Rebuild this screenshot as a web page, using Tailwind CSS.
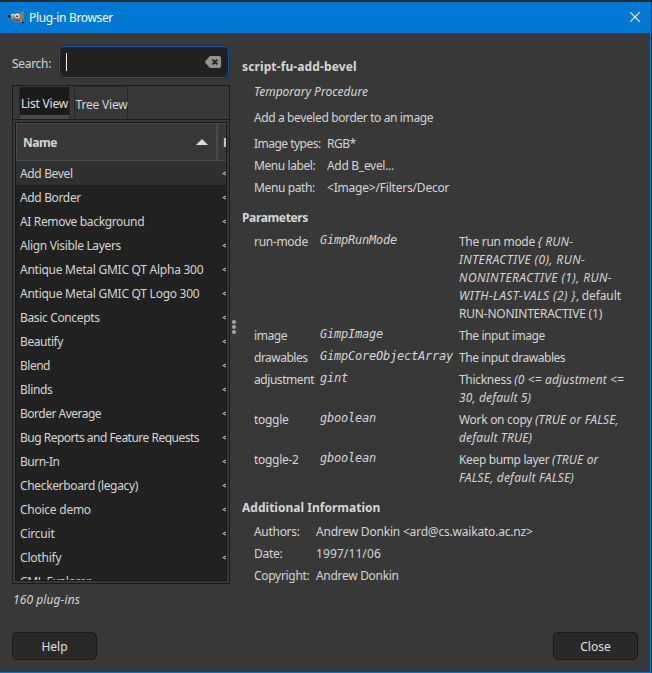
<!DOCTYPE html>
<html lang="en">
<head>
<meta charset="utf-8">
<title>Plug-in Browser</title>
<script src="https://cdn.jsdelivr.net/npm/@tailwindcss/browser@4"></script>
</head>
<body class="w-[652px] h-[673px] overflow-hidden bg-[#2b2b2b] pt-[2px] pr-px font-['Noto_Sans','Open_Sans',sans-serif] text-[12px] leading-[18px] text-[#d6d6d6] whitespace-nowrap">
<div class="h-[671px] flex flex-col border-r border-b border-[#0078d4] bg-[#383838]">

  <!-- Title bar -->
  <header class="h-[31px] shrink-0 flex items-center bg-[#0078d4] pl-[8px] pr-[9px] text-white">
    <svg class="w-[17px] h-[15px]" viewBox="0 0 17 15">
      <path d="M2 5C4 3 7 3.4 9 3.6C11 3.6 13.5 2.4 15.4 .8C16 2.5 16.2 6 15.4 8.8C14.6 11.4 12.5 12.4 10.5 12.4C7 12.4 3.5 11 2.6 7.5Z" fill="#857d72"/>
      <circle cx="1.3" cy="6.2" r="1.3" fill="#111"/>
      <circle cx="5" cy="5.6" r="1.8" fill="#f2f2f2"/><circle cx="9.4" cy="5.9" r="2.3" fill="#f2f2f2"/>
      <circle cx="5" cy="6" r=".8" fill="#111"/><circle cx="9.2" cy="6.2" r="1" fill="#111"/>
      <path d="M5 9.8L12 11" stroke="#4a4036" stroke-width="1"/>
      <path d="M12 10.6L14 11.8" stroke="#e08a2c" stroke-width="1.2"/>
      <path d="M13.8 11.2L16 12.2L15.4 14L14 12.8Z" fill="#15202c"/>
    </svg>
    <h1 class="ml-[4px] pt-px tracking-[-0.34px]">Plug-in Browser</h1>
    <svg class="ml-auto w-[12px] h-[12px] mb-px" viewBox="0 0 12 12" fill="none" stroke="#fff" stroke-width="1.2"><path d="M1.2 1.2L10.8 10.8M10.8 1.2L1.2 10.8"/></svg>
  </header>

  <div class="flex h-[578px] shrink-0">
    <!-- Left pane -->
    <section class="w-[230px] shrink-0 pl-[12px] pt-[12px] flex flex-col">
      <div class="flex h-[34px] items-center">
        <label class="w-[46px] tracking-[-0.3px] pt-[3px]">Search:</label>
        <div class="flex-1 h-[34px] rounded-[6px] border border-[#2a2e36] bg-[#212121]">
          <div class="h-full rounded-[5px] border border-[#1256a8] flex items-center pl-[6px] pr-[7px]">
            <div class="w-px h-[18px] bg-[#f0f0f0]"></div>
            <svg class="ml-auto w-[16px] h-[12px]" viewBox="0 0 16 12"><path d="M5 0H14Q16 0 16 2V10Q16 12 14 12H5L.6 7.2Q-.2 6 .6 4.8Z" fill="#929292"/><path d="M7.6 3.6L12.2 8.4M12.2 3.6L7.6 8.4" stroke="#212121" stroke-width="2"/></svg>
          </div>
        </div>
      </div>

      <div class="mt-[6px] h-[499px] border border-[#1a1a1a] flex flex-col">
        <nav class="h-[34px] shrink-0 flex border-b border-[#1a1a1a] pl-[6px]">
          <div class="w-[51px] border-x border-[#2a2a2a] flex">
            <div class="flex-1 mt-px bg-[#1b1b1b] border-b-4 border-[#4a4a4a] flex items-center justify-center pt-[6px] text-[#e2e2e2] tracking-[-0.2px]">List View</div>
          </div>
          <div class="ml-[4px] w-[54px] border-x border-t border-[#292929] flex items-center justify-center pt-[3px] pl-px tracking-[-0.2px]">Tree View</div>
        </nav>
        <div class="mt-[2px] mx-[2px] h-[459px] border border-[#161616] bg-[#212121] overflow-hidden">
          <div class="h-[38px] flex bg-[#383838] border-t border-l border-b border-[#4a4a4a]">
            <div class="w-[199px] shrink-0 flex items-center justify-between pl-[6px] pr-[8px] pt-[2px] font-bold tracking-[-0.45px]">Name
              <svg class="w-[12px] h-[6px] mb-[2px]" viewBox="0 0 12 6"><path d="M6 0L12 6H0Z" fill="#dedede"/></svg>
            </div>
            <div class="border-l-2 border-[#4a4a4a] pl-[5px] pt-[2px] flex items-center font-bold">P</div>
          </div>
          <ul class="leading-[26px] tracking-[-0.35px] [&>li]:flex [&>li]:h-[24px] [&>li]:pl-[4px] [&_span]:w-[202px] [&_span]:shrink-0">
            <li class="bg-[#303030]"><span>Add Bevel</span>&lt;</li>
            <li><span>Add Border</span>&lt;</li>
            <li><span>AI Remove background</span>&lt;</li>
            <li><span>Align Visible Layers</span>&lt;</li>
            <li><span class="tracking-[-0.26px]">Antique Metal GMIC QT Alpha 300</span>&lt;</li>
            <li><span class="tracking-[-0.26px]">Antique Metal GMIC QT Logo 300</span>&lt;</li>
            <li><span>Basic Concepts</span>&lt;</li>
            <li><span class="tracking-[-0.42px]">Beautify</span>&lt;</li>
            <li><span class="tracking-[-0.5px]">Blend</span>&lt;</li>
            <li><span>Blinds</span>&lt;</li>
            <li><span class="tracking-[-0.5px]">Border Average</span>&lt;</li>
            <li><span class="tracking-[-0.5px]">Bug Reports and Feature Requests</span>&lt;</li>
            <li><span class="tracking-[-0.5px]">Burn-In</span>&lt;</li>
            <li><span>Checkerboard (legacy)</span>&lt;</li>
            <li><span class="tracking-[-0.25px]">Choice demo</span>&lt;</li>
            <li><span class="tracking-[-0.2px]">Circuit</span>&lt;</li>
            <li><span class="tracking-[-0.2px]">Clothify</span>&lt;</li>
            <li><span>CML Explorer</span></li>
          </ul>
        </div>
      </div>
      <p class="mt-[7px] pl-px italic tracking-[0.09px]">160 plug-ins</p>
    </section>

    <!-- Pane handle -->
    <div class="w-[12px] shrink-0 flex flex-col gap-[1px] pt-[287px] pl-[2px]">
      <i class="size-[4px] rounded-full bg-[#a2a6a4]"></i><i class="size-[4px] rounded-full bg-[#a2a6a4]"></i><i class="size-[4px] rounded-full bg-[#a2a6a4]"></i>
    </div>

    <!-- Procedure details -->
    <section class="pt-[25px] tracking-[-0.3px]">
      <h2 class="font-bold tracking-[0.12px]">script-fu-add-bevel</h2>
      <div class="pl-[12px]">
        <p class="mt-[7px] italic tracking-[-0.01px]">Temporary Procedure</p>
        <p class="mt-[8px] tracking-[-0.38px]">Add a beveled border to an image</p>
        <dl class="mt-[8px] grid grid-cols-[73px_auto] gap-y-[4px]">
          <dt class="tracking-[-0.52px]">Image types:</dt><dd class="tracking-[-0.5px]">RGB*</dd>
          <dt class="tracking-[-0.42px]">Menu label:</dt><dd>Add B_evel...</dd>
          <dt class="tracking-[-0.38px]">Menu path:</dt><dd class="tracking-[-0.2px]">&lt;Image&gt;/Filters/Decor</dd>
        </dl>
      </div>
      <h2 class="mt-[12px] font-bold tracking-[-0.36px]">Parameters</h2>
      <dl class="mt-[6px] pl-[12px] grid grid-cols-[66px_139px_auto] gap-y-[4px] [&_code]:-mt-[2px] [&_code]:italic [&_code]:font-['DejaVu_Sans_Mono',monospace] [&_code]:text-[12px] [&_code]:tracking-[-0.22px] [&_i]:tracking-[0.14px]">
        <dt>run-mode</dt><code>GimpRunMode</code>
        <dd>The run mode <i>{ RUN-<br><span class="tracking-[0.4px]">INTERACTIVE (0), RUN-<br>NONINTERACTIVE (1), RUN-<br>WITH-LAST-VALS (2) }</span></i>, <span class="tracking-[-0.1px]">default</span><br><span class="tracking-[-0.21px]">RUN-NONINTERACTIVE (1)</span></dd>
        <dt class="tracking-[-0.45px]">image</dt><code>GimpImage</code><dd class="tracking-[-0.4px]">The input image</dd>
        <dt class="tracking-[-0.5px]">drawables</dt><code>GimpCoreObjectArray</code><dd class="tracking-[-0.45px]">The input drawables</dd>
        <dt class="tracking-[-0.44px]">adjustment</dt><code>gint</code><dd>Thickness <i>(0 &lt;= adjustment &lt;=<br>30, default 5)</i></dd>
        <dt>toggle</dt><code>gboolean</code><dd>Work on copy <i>(TRUE or FALSE,<br>default TRUE)</i></dd>
        <dt>toggle-2</dt><code>gboolean</code><dd class="tracking-[-0.36px]">Keep bump layer <i>(TRUE or<br><span class="tracking-[0.2px]">FALSE, default FALSE)</span></i></dd>
      </dl>
      <h2 class="mt-[12px] font-bold tracking-[0.02px]">Additional Information</h2>
      <dl class="mt-[6px] pl-[12px] grid grid-cols-[62px_auto] gap-y-[4px]">
        <dt>Authors:</dt><dd class="tracking-[-0.2px]">Andrew Donkin &lt;ard@cs.waikato.ac.nz&gt;</dd>
        <dt>Date:</dt><dd class="tracking-[0.1px]">1997/11/06</dd>
        <dt>Copyright:</dt><dd>Andrew Donkin</dd>
      </dl>
    </section>
  </div>

  <!-- Dialog actions -->
  <footer class="flex justify-between pt-[21px] pl-[12px] pr-[12px] text-[#e2e2e2]">
    <button class="w-[85px] h-[28px] rounded-[5px] border border-[#191919] bg-[#292929] pt-[2px]">Help</button>
    <button class="w-[85px] h-[28px] rounded-[5px] border border-[#191919] bg-[#292929] pt-[2px]">Close</button>
  </footer>
</div>
</body>
</html>
